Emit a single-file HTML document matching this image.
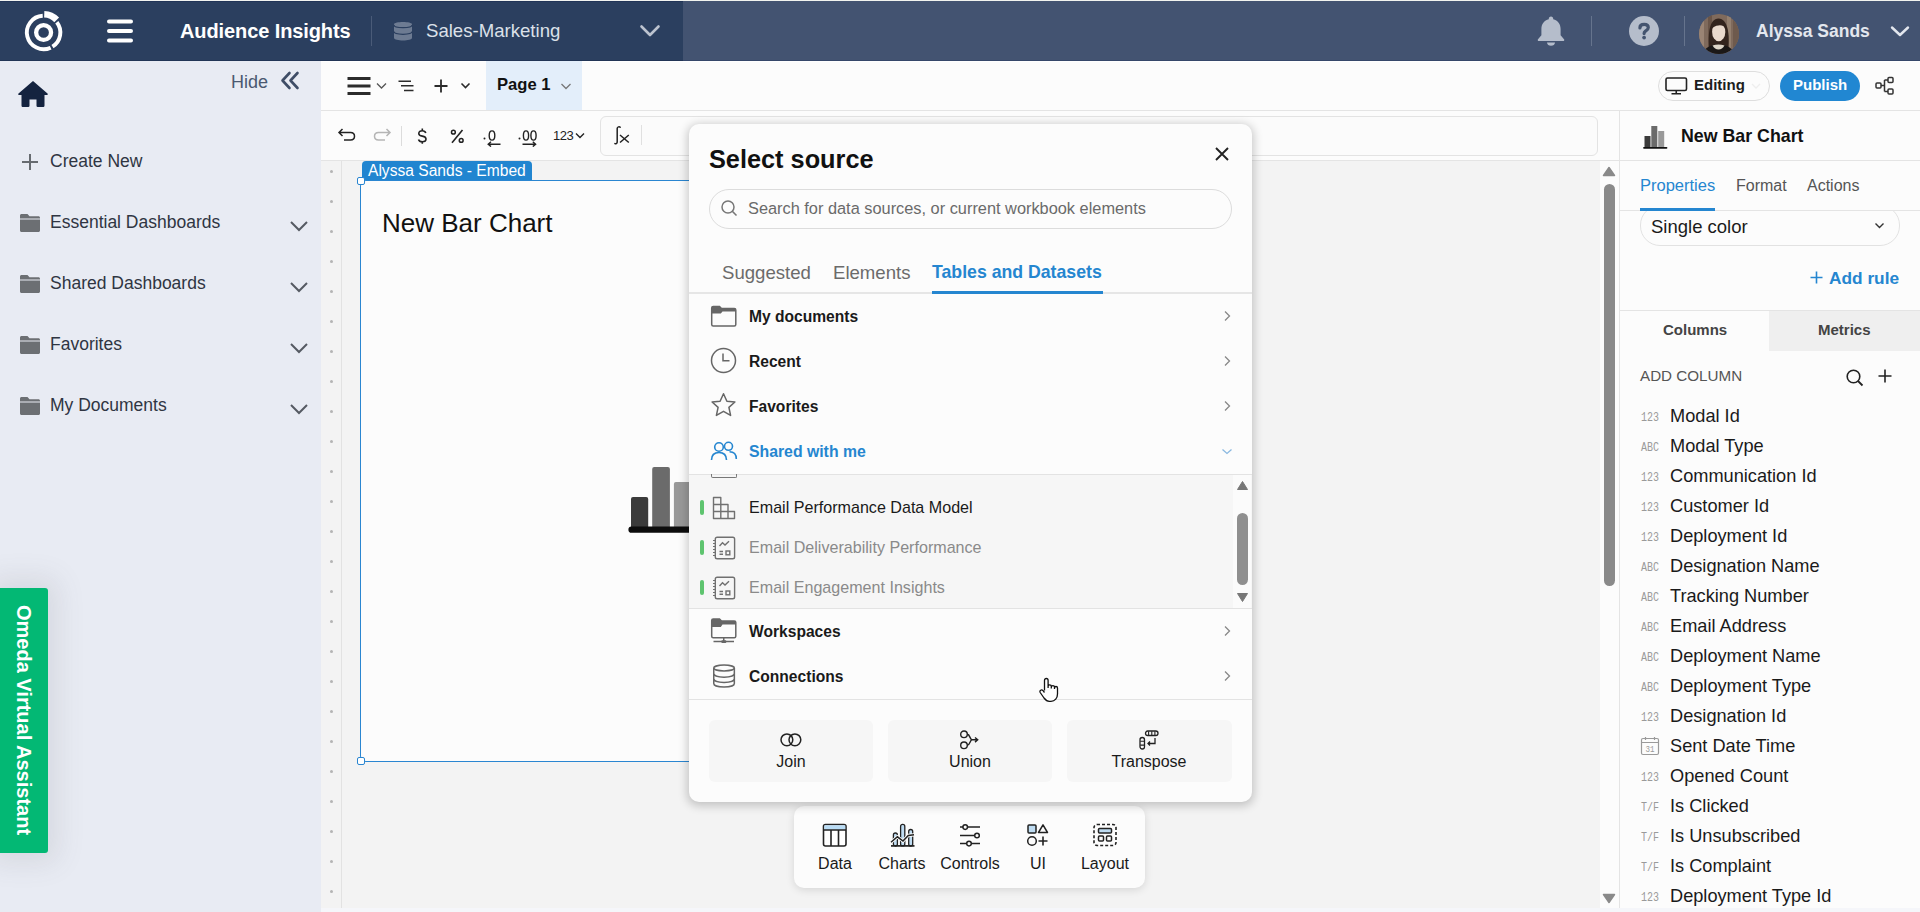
<!DOCTYPE html>
<html><head><meta charset="utf-8">
<style>
*{box-sizing:border-box;margin:0;padding:0}
html,body{width:1920px;height:912px;overflow:hidden;background:#f3f3f3;font-family:"Liberation Sans",sans-serif;color:#1a1a1a}
.abs{position:absolute}
svg{display:block}
#topline{left:0;top:0;width:1920px;height:1px;background:#f2f3ef}
#hdr{left:0;top:1px;width:1920px;height:60px;background:#435371;border-bottom:1px solid #36476a}
#hdrL{left:0;top:1px;width:683px;height:60px;background:#2b3f5f;border-top:1px solid #213457;border-bottom:1px solid #223556}
#side{left:0;top:61px;width:321px;height:851px;background:#e8ebf3}
#tb1{left:321px;top:61px;width:1599px;height:50px;background:#fcfcfc;border-bottom:1px solid #e4e4e4;border-top:1px solid #fff}
#tb2{left:321px;top:111px;width:1299px;height:50px;background:#fcfcfc;border-bottom:1px solid #e4e4e4}
#canvas{left:321px;top:161px;width:1299px;height:751px;background:#f3f3f3}
#rp{left:1619px;top:111px;width:301px;height:801px;background:#fcfcfc;border-left:1px solid #e4e4e4}
</style></head>
<body>
<div class="abs" id="topline"></div>
<div class="abs" id="hdr"></div>
<div class="abs" id="hdrL"></div>
<div class="abs" id="side"></div>
<div class="abs" id="tb1"></div>
<div class="abs" id="tb2"></div>
<div class="abs" id="canvas"></div>
<div class="abs" id="rp"></div>




<!-- CANVAS -->
<div class="abs" style="left:341px;top:161px;width:1px;height:751px;background:#e2e2e2"></div>
<div class="abs" style="left:330px;top:170px;width:3px;height:3px;border-radius:50%;background:#b4b4b4"></div><div class="abs" style="left:330px;top:200px;width:3px;height:3px;border-radius:50%;background:#b4b4b4"></div><div class="abs" style="left:330px;top:230px;width:3px;height:3px;border-radius:50%;background:#b4b4b4"></div><div class="abs" style="left:330px;top:260px;width:3px;height:3px;border-radius:50%;background:#b4b4b4"></div><div class="abs" style="left:330px;top:290px;width:3px;height:3px;border-radius:50%;background:#b4b4b4"></div><div class="abs" style="left:330px;top:320px;width:3px;height:3px;border-radius:50%;background:#b4b4b4"></div><div class="abs" style="left:330px;top:350px;width:3px;height:3px;border-radius:50%;background:#b4b4b4"></div><div class="abs" style="left:330px;top:380px;width:3px;height:3px;border-radius:50%;background:#b4b4b4"></div><div class="abs" style="left:330px;top:410px;width:3px;height:3px;border-radius:50%;background:#b4b4b4"></div><div class="abs" style="left:330px;top:440px;width:3px;height:3px;border-radius:50%;background:#b4b4b4"></div><div class="abs" style="left:330px;top:470px;width:3px;height:3px;border-radius:50%;background:#b4b4b4"></div><div class="abs" style="left:330px;top:500px;width:3px;height:3px;border-radius:50%;background:#b4b4b4"></div><div class="abs" style="left:330px;top:530px;width:3px;height:3px;border-radius:50%;background:#b4b4b4"></div><div class="abs" style="left:330px;top:560px;width:3px;height:3px;border-radius:50%;background:#b4b4b4"></div><div class="abs" style="left:330px;top:590px;width:3px;height:3px;border-radius:50%;background:#b4b4b4"></div><div class="abs" style="left:330px;top:620px;width:3px;height:3px;border-radius:50%;background:#b4b4b4"></div><div class="abs" style="left:330px;top:650px;width:3px;height:3px;border-radius:50%;background:#b4b4b4"></div><div class="abs" style="left:330px;top:680px;width:3px;height:3px;border-radius:50%;background:#b4b4b4"></div><div class="abs" style="left:330px;top:710px;width:3px;height:3px;border-radius:50%;background:#b4b4b4"></div><div class="abs" style="left:330px;top:740px;width:3px;height:3px;border-radius:50%;background:#b4b4b4"></div><div class="abs" style="left:330px;top:770px;width:3px;height:3px;border-radius:50%;background:#b4b4b4"></div><div class="abs" style="left:330px;top:800px;width:3px;height:3px;border-radius:50%;background:#b4b4b4"></div><div class="abs" style="left:330px;top:830px;width:3px;height:3px;border-radius:50%;background:#b4b4b4"></div><div class="abs" style="left:330px;top:860px;width:3px;height:3px;border-radius:50%;background:#b4b4b4"></div><div class="abs" style="left:330px;top:890px;width:3px;height:3px;border-radius:50%;background:#b4b4b4"></div>
<div class="abs" style="left:360px;top:180px;width:400px;height:582px;background:#fcfcfc;border:1px solid #2a86d1;border-radius:6px 0 0 6px"></div>
<div class="abs" style="left:362px;top:161px;width:170px;height:19px;background:#2185d0;border-radius:4px 4px 0 0"></div>
<div class="abs" style="left:368px;top:161px;font-size:15.6px;line-height:19px;color:#fff;white-space:nowrap">Alyssa Sands - Embed</div>
<div class="abs" style="left:357px;top:177px;width:8px;height:8px;background:#fff;border:1.5px solid #2a86d1;border-radius:2px"></div>
<div class="abs" style="left:357px;top:757px;width:8px;height:8px;background:#fff;border:1.5px solid #2a86d1;border-radius:2px"></div>
<div class="abs" style="left:382px;top:208px;font-size:26px;color:#111;white-space:nowrap">New Bar Chart</div>
<svg class="abs" style="left:625px;top:464px" width="70" height="72" viewBox="0 0 70 72">
<rect x="6" y="33" width="17.2" height="32" rx="2" fill="#3b3b3b"/>
<rect x="27.2" y="3" width="17.7" height="62" rx="2" fill="#6b6b6b"/>
<rect x="48.9" y="18" width="20" height="47" rx="2" fill="#999"/>
<path d="M6.5 65.7H69" stroke="#0d0d0d" stroke-width="6.2" stroke-linecap="round"/>
</svg>
<!-- canvas scrollbar -->
<div class="abs" style="left:1600px;top:161px;width:19px;height:751px;background:#fcfcfc"></div>
<svg class="abs" style="left:1602px;top:166px" width="14" height="11" viewBox="0 0 14 11"><path d="M7 1.5L12.5 9.5H1.5Z" fill="#8a8a8a" stroke="#8a8a8a" stroke-width="1.5" stroke-linejoin="round"/></svg>
<div class="abs" style="left:1604px;top:184px;width:11px;height:402px;background:#8a8a8a;border-radius:6px"></div>
<svg class="abs" style="left:1602px;top:893px" width="14" height="11" viewBox="0 0 14 11"><path d="M7 9.5L12.5 1.5H1.5Z" fill="#8a8a8a" stroke="#8a8a8a" stroke-width="1.5" stroke-linejoin="round"/></svg>
<!-- TOOLBAR1 -->
<div class="abs" style="left:486px;top:61px;width:96px;height:49px;background:#e3eefa"></div>
<svg class="abs" style="left:346px;top:75px" width="26" height="22" viewBox="0 0 26 22">
<path d="M1.5 3.6H24.5M1.5 11H24.5M1.5 18.4H24.5" stroke="#2b2b2b" stroke-width="3"/>
</svg>
<svg class="abs" style="left:376px;top:82px" width="11" height="8" viewBox="0 0 11 8"><path d="M1 1.5L5.5 6L10 1.5" fill="none" stroke="#555" stroke-width="1.3"/></svg>
<svg class="abs" style="left:398px;top:80px" width="17" height="12" viewBox="0 0 17 12">
<path d="M0.5 1.2H13M3 5.8H15.5M6 10.4H15.5" stroke="#2b2b2b" stroke-width="1.5"/>
</svg>
<svg class="abs" style="left:434px;top:79px" width="14" height="14" viewBox="0 0 14 14"><path d="M7 0.5V13.5M0.5 7H13.5" stroke="#2b2b2b" stroke-width="1.8"/></svg>
<svg class="abs" style="left:460px;top:82px" width="11" height="8" viewBox="0 0 11 8"><path d="M1.5 1.5L5.5 5.5L9.5 1.5" fill="none" stroke="#2b2b2b" stroke-width="1.6"/></svg>
<div class="abs" style="left:497px;top:75px;font-weight:bold;font-size:16.6px;color:#111;white-space:nowrap">Page 1</div>
<svg class="abs" style="left:560px;top:82px" width="12" height="9" viewBox="0 0 12 9"><path d="M1.5 2L6 6.5L10.5 2" fill="none" stroke="#777" stroke-width="1.3"/></svg>

<div class="abs" style="left:1658px;top:71px;width:112px;height:30px;border:1px solid #dedede;border-radius:15px;background:#fcfcfc"></div>
<svg class="abs" style="left:1665px;top:77px" width="23" height="18" viewBox="0 0 23 18">
<rect x="1" y="1" width="20.5" height="12.5" rx="1.5" fill="none" stroke="#222" stroke-width="1.6"/>
<path d="M11.25 13.5V16.5M6.5 16.8H16" stroke="#222" stroke-width="1.6"/>
</svg>
<div class="abs" style="left:1694px;top:76px;font-weight:bold;font-size:15px;color:#1d1d1d;white-space:nowrap">Editing</div>
<svg class="abs" style="left:1750px;top:82px" width="12" height="8" viewBox="0 0 12 8"><path d="M2 2L6 6L10 2" fill="none" stroke="#eeeeee" stroke-width="1.3"/></svg>
<div class="abs" style="left:1780px;top:71px;width:80px;height:30px;border-radius:15px;background:#2187d2"></div>
<div class="abs" style="left:1793px;top:76px;font-weight:bold;font-size:15px;color:#fff;white-space:nowrap">Publish</div>
<svg class="abs" style="left:1875px;top:76px" width="20" height="20" viewBox="0 0 20 20">
<rect x="1" y="7" width="5" height="5" rx="1" fill="none" stroke="#333" stroke-width="1.5"/>
<rect x="13" y="1.5" width="5" height="5" rx="1" fill="none" stroke="#333" stroke-width="1.5"/>
<rect x="13" y="13" width="5" height="5" rx="1" fill="none" stroke="#333" stroke-width="1.5"/>
<path d="M6 9.5H9.5M9.5 4V15.5M9.5 4H13M9.5 15.5H13" fill="none" stroke="#333" stroke-width="1.5"/>
</svg>

<!-- TOOLBAR2 -->
<svg class="abs" style="left:337px;top:127px" width="20" height="15" viewBox="0 0 20 15">
<path d="M5.5 2L2 5.5L5.5 9M2 5.5H13.5C16 5.5 17.5 7 17.5 9.3C17.5 11.5 16 13 13.5 13H7" fill="none" stroke="#222" stroke-width="1.5"/>
</svg>
<svg class="abs" style="left:372px;top:127px" width="20" height="15" viewBox="0 0 20 15">
<path d="M14.5 2L18 5.5L14.5 9M18 5.5H6.5C4 5.5 2.5 7 2.5 9.3C2.5 11.5 4 13 6.5 13H13" fill="none" stroke="#b5b5b5" stroke-width="1.5"/>
</svg>
<div class="abs" style="left:401px;top:126px;width:1px;height:20px;background:#dcdcdc"></div>
<svg class="abs" style="left:416px;top:127px" width="13" height="18" viewBox="0 0 13 18"><path d="M9.8 5.9C9.3 4.5 8 3.7 6.3 3.7C4.3 3.7 2.8 4.7 2.8 6.4C2.8 8.1 4.2 8.7 6.3 9.1C8.5 9.5 10 10.2 10 12.1C10 13.9 8.4 14.8 6.3 14.8C4.4 14.8 3 14 2.5 12.5M6.3 1.6V3.7M6.3 14.8V16.8" fill="none" stroke="#222" stroke-width="1.6"/></svg>
<svg class="abs" style="left:449px;top:127px" width="17" height="18" viewBox="0 0 17 18"><circle cx="4.4" cy="5.2" r="1.9" fill="none" stroke="#222" stroke-width="1.5"/><circle cx="12.2" cy="13.4" r="1.9" fill="none" stroke="#222" stroke-width="1.5"/><path d="M13.5 3L3 15.8" stroke="#222" stroke-width="1.6"/></svg>
<svg class="abs" style="left:482px;top:129px" width="20" height="18" viewBox="0 0 20 18">
<circle cx="2.5" cy="9.5" r="1" fill="#222"/>
<ellipse cx="10" cy="6.5" rx="2.8" ry="4.6" fill="none" stroke="#222" stroke-width="1.4"/>
<path d="M18.5 15.2H6.5M9 12.8L6.2 15.2L9 17.6" fill="none" stroke="#222" stroke-width="1.4"/>
</svg>
<svg class="abs" style="left:517px;top:129px" width="22" height="18" viewBox="0 0 22 18">
<circle cx="2.5" cy="9.5" r="1" fill="#222"/>
<ellipse cx="9" cy="6.5" rx="2.6" ry="4.6" fill="none" stroke="#222" stroke-width="1.4"/>
<ellipse cx="16.5" cy="6.5" rx="2.6" ry="4.6" fill="none" stroke="#222" stroke-width="1.4"/>
<path d="M5.5 15.2H18.5M15.8 12.8L18.6 15.2L15.8 17.6" fill="none" stroke="#222" stroke-width="1.4"/>
</svg>
<div class="abs" style="left:553px;top:128px;font-size:13px;color:#222;white-space:nowrap;letter-spacing:-0.5px">123</div>
<svg class="abs" style="left:575px;top:132px" width="10" height="7" viewBox="0 0 10 7"><path d="M1 1.5L5 5.5L9 1.5" fill="none" stroke="#222" stroke-width="1.4"/></svg>
<div class="abs" style="left:600px;top:116px;width:998px;height:40px;border:1px solid #e3e3e3;border-radius:6px;background:#fbfbfb"></div>
<svg class="abs" style="left:612px;top:124px" width="22" height="24" viewBox="0 0 22 24">
<path d="M8.2 3.3C7.5 2.5 5.4 2.6 5.2 4.4V18.2C5 19.7 3.8 20.1 2.9 19.6" fill="none" stroke="#222" stroke-width="1.5" stroke-linecap="round"/>
<path d="M8 11L16.8 18.5M16.8 11L8 18.5" stroke="#222" stroke-width="1.5"/>
</svg>
<div class="abs" style="left:641px;top:125px;width:1px;height:20px;background:#e0e0e0"></div>


<!-- DOCK -->
<div class="abs" style="left:794px;top:806px;width:351px;height:82px;background:#fcfcfc;border-radius:10px;box-shadow:0 2px 8px rgba(0,0,0,0.12)"></div>
<svg class="abs" style="left:822px;top:823px" width="26" height="25" viewBox="0 0 26 25">
<rect x="1.5" y="1.5" width="22.5" height="21.5" rx="2" fill="#fff" stroke="#222" stroke-width="1.6"/>
<rect x="2.3" y="2.3" width="21" height="4.5" fill="#b9dcf5"/>
<path d="M1.5 7H24M9 7V23M16.5 7V23" stroke="#222" stroke-width="1.6"/>
</svg>
<div class="abs" style="left:790px;top:855px;width:90px;text-align:center;font-size:16px;color:#1a1a1a">Data</div>
<svg class="abs" style="left:889px;top:822px" width="27" height="26" viewBox="0 0 27 26">
<rect x="4.4" y="11" width="4" height="13" rx="2" fill="#bfdcf2" stroke="#222" stroke-width="1.3"/>
<rect x="11.6" y="2.4" width="4.2" height="21.5" rx="2" fill="#bfdcf2" stroke="#222" stroke-width="1.3"/>
<rect x="19.7" y="7.5" width="4" height="16.5" rx="2" fill="#bfdcf2" stroke="#222" stroke-width="1.3"/>
<path d="M2 20.2L8.4 14.8L14 19L19.3 13.4L25 12.8" fill="none" stroke="#fcfcfc" stroke-width="3.2"/>
<path d="M2 20.2L8.4 14.8L14 19L19.3 13.4L25 12.8" fill="none" stroke="#222" stroke-width="1.5"/>
<path d="M2 23.9H25.5" stroke="#222" stroke-width="1.7"/>
</svg>
<div class="abs" style="left:857px;top:855px;width:90px;text-align:center;font-size:16px;color:#1a1a1a">Charts</div>
<svg class="abs" style="left:958px;top:823px" width="24" height="24" viewBox="0 0 24 24">
<path d="M2 4.1H22M2 12.5H22M2 20.6H22" stroke="#222" stroke-width="1.5"/>
<circle cx="7.2" cy="4.1" r="2.3" fill="#fcfcfc" stroke="#222" stroke-width="1.5"/>
<circle cx="19" cy="12.5" r="2.3" fill="#fcfcfc" stroke="#222" stroke-width="1.5"/>
<circle cx="11" cy="20.6" r="2.3" fill="#fcfcfc" stroke="#222" stroke-width="1.5"/>
</svg>
<div class="abs" style="left:925px;top:855px;width:90px;text-align:center;font-size:16px;color:#1a1a1a">Controls</div>
<svg class="abs" style="left:1026px;top:823px" width="24" height="24" viewBox="0 0 24 24">
<rect x="2" y="2" width="8" height="8" rx="1" fill="#bfdcf2" stroke="#222" stroke-width="1.5"/>
<path d="M17 1.8L21.5 9.5H12.5Z" fill="none" stroke="#222" stroke-width="1.5" stroke-linejoin="round"/>
<circle cx="6" cy="18" r="4.3" fill="none" stroke="#222" stroke-width="1.5"/>
<path d="M17 13.5V22.5M12.5 18H21.5" stroke="#222" stroke-width="1.6"/>
</svg>
<div class="abs" style="left:993px;top:855px;width:90px;text-align:center;font-size:16px;color:#1a1a1a">UI</div>
<svg class="abs" style="left:1092px;top:823px" width="26" height="24" viewBox="0 0 26 24">
<rect x="2" y="1.5" width="22" height="21" rx="3" fill="none" stroke="#222" stroke-width="1.6" stroke-dasharray="3 2"/>
<rect x="6.5" y="5.5" width="13" height="4.5" rx="1" fill="#bfdcf2" stroke="#222" stroke-width="1.5"/>
<rect x="6.5" y="13" width="5" height="5" rx="1" fill="none" stroke="#222" stroke-width="1.5"/>
<rect x="14.5" y="13" width="5" height="5" rx="1" fill="none" stroke="#222" stroke-width="1.5"/>
</svg>
<div class="abs" style="left:1060px;top:855px;width:90px;text-align:center;font-size:16px;color:#1a1a1a">Layout</div>
<!-- MODAL -->
<div class="abs" style="left:689px;top:124px;width:563px;height:678px;background:#fcfcfc;border-radius:10px;box-shadow:0 2px 10px 2px rgba(0,0,0,0.2)"></div>
<div class="abs" style="left:709px;top:145px;font-weight:bold;font-size:25.3px;color:#111;white-space:nowrap">Select source</div>
<svg class="abs" style="left:1213px;top:145px" width="18" height="18" viewBox="0 0 18 18"><path d="M3 3L15 15M15 3L3 15" stroke="#222" stroke-width="1.9"/></svg>
<div class="abs" style="left:709px;top:189px;width:523px;height:40px;border:1px solid #dcdcdc;border-radius:20px;background:#fcfcfc"></div>
<svg class="abs" style="left:720px;top:199px" width="19" height="19" viewBox="0 0 19 19"><circle cx="8" cy="8" r="6" fill="none" stroke="#777" stroke-width="1.5"/><path d="M12.3 12.3L16.5 16.5" stroke="#777" stroke-width="1.6"/></svg>
<div class="abs" style="left:748px;top:199px;font-size:16.35px;color:#6a6a6a;white-space:nowrap">Search for data sources, or current workbook elements</div>
<div class="abs" style="left:722px;top:262px;font-size:18.6px;color:#6b6b6b;white-space:nowrap">Suggested</div>
<div class="abs" style="left:833px;top:262px;font-size:18.6px;color:#6b6b6b;white-space:nowrap">Elements</div>
<div class="abs" style="left:932px;top:262px;font-weight:bold;font-size:17.7px;color:#2586d0;white-space:nowrap">Tables and Datasets</div>
<div class="abs" style="left:689px;top:292px;width:563px;height:2px;background:#e6e6e6"></div>
<div class="abs" style="left:932px;top:291px;width:171px;height:3px;background:#2586d0"></div>

<svg class="abs" style="left:710px;top:305px" width="28" height="23" viewBox="0 0 28 23">
<path d="M1.7 3C1.7 2.2 2.4 1.6 3.2 1.6H9.5L11.5 3.6H24.3C25.1 3.6 25.8 4.3 25.8 5.1V19.5C25.8 20.3 25.1 21 24.3 21H3.2C2.4 21 1.7 20.3 1.7 19.5Z" fill="none" stroke="#666" stroke-width="1.5"/>
<path d="M3.2 1.6H9.5L11.5 3.6H24.3C25.1 3.6 25.8 4.3 25.8 5.1V6.6H12.5L10.8 8.6H1.7V3C1.7 2.2 2.4 1.6 3.2 1.6Z" fill="#666"/>
</svg>
<div class="abs" style="left:749px;top:308px;font-weight:bold;font-size:15.6px;color:#1a1a1a;white-space:nowrap">My documents</div>
<svg class="abs" style="left:1222px;top:310px" width="10" height="12" viewBox="0 0 10 12"><path d="M3 1.5L7.5 6L3 10.5" fill="none" stroke="#888" stroke-width="1.3"/></svg>
<svg class="abs" style="left:710px;top:347px" width="28" height="28" viewBox="0 0 28 28"><circle cx="13.5" cy="13.5" r="12" fill="none" stroke="#666" stroke-width="1.5"/><path d="M13 6.5V13.8H19.5" fill="none" stroke="#666" stroke-width="1.5"/></svg>
<div class="abs" style="left:749px;top:353px;font-weight:bold;font-size:15.6px;color:#1a1a1a;white-space:nowrap">Recent</div>
<svg class="abs" style="left:1222px;top:355px" width="10" height="12" viewBox="0 0 10 12"><path d="M3 1.5L7.5 6L3 10.5" fill="none" stroke="#888" stroke-width="1.3"/></svg>
<svg class="abs" style="left:710px;top:392px" width="28" height="27" viewBox="0 0 28 27"><path d="M13.5 1.8L16.9 9.2L24.9 10L18.9 15.4L20.6 23.4L13.5 19.3L6.4 23.4L8.1 15.4L2.1 10L10.1 9.2Z" fill="none" stroke="#666" stroke-width="1.5" stroke-linejoin="round"/></svg>
<div class="abs" style="left:749px;top:398px;font-weight:bold;font-size:15.6px;color:#1a1a1a;white-space:nowrap">Favorites</div>
<svg class="abs" style="left:1222px;top:400px" width="10" height="12" viewBox="0 0 10 12"><path d="M3 1.5L7.5 6L3 10.5" fill="none" stroke="#888" stroke-width="1.3"/></svg>
<svg class="abs" style="left:710px;top:441px" width="28" height="20" viewBox="0 0 28 20">
<circle cx="9" cy="6" r="4.3" fill="none" stroke="#2586d0" stroke-width="1.6"/>
<path d="M1.5 19C1.5 14 4.5 11.5 9 11.5C13.5 11.5 16.5 14 16.5 19" fill="none" stroke="#2586d0" stroke-width="1.6"/>
<circle cx="18.5" cy="5.3" r="4" fill="none" stroke="#2586d0" stroke-width="1.6"/>
<path d="M19.5 10.8C23.5 10.8 26.3 13.2 26.3 18" fill="none" stroke="#2586d0" stroke-width="1.6"/>
</svg>
<div class="abs" style="left:749px;top:443px;font-weight:bold;font-size:15.8px;color:#2586d0;white-space:nowrap">Shared with me</div>
<svg class="abs" style="left:1221px;top:447px" width="12" height="9" viewBox="0 0 12 9"><path d="M1.5 2.5L6 6.5L10.5 2.5" fill="none" stroke="#8ab8e0" stroke-width="1.3"/></svg>

<div class="abs" style="left:689px;top:474px;width:563px;height:135px;background:#f6f6f6;border-top:1px solid #e3e3e3;border-bottom:1px solid #e3e3e3"></div>
<div class="abs" style="left:1233px;top:475px;width:18px;height:133px;background:#fbfbfb"></div>
<div class="abs" style="left:711px;top:474px;width:26px;height:4px;border:1.5px solid #777;border-top:none;border-radius:0 0 2px 2px"></div>
<svg class="abs" style="left:1236px;top:480px" width="13" height="11" viewBox="0 0 13 11"><path d="M6.5 1.5L11.5 9.5H1.5Z" fill="#777" stroke="#777" stroke-width="1" stroke-linejoin="round"/></svg>
<div class="abs" style="left:1237px;top:513px;width:11px;height:72px;background:#8f8f8f;border-radius:6px"></div>
<svg class="abs" style="left:1236px;top:592px" width="13" height="11" viewBox="0 0 13 11"><path d="M6.5 9.5L11.5 1.5H1.5Z" fill="#777" stroke="#777" stroke-width="1" stroke-linejoin="round"/></svg>

<div class="abs" style="left:700px;top:500px;width:4px;height:15px;background:#5ec46f;border-radius:2px"></div>
<svg class="abs" style="left:712px;top:496px" width="24" height="24" viewBox="0 0 24 24">
<path d="M1.5 1.5H8.8V22.5H1.5ZM1.5 8.5H16V22.5H8.8M1.5 15.5H22.5V22.5H16V8.5" fill="none" stroke="#707070" stroke-width="1.4" stroke-linejoin="round"/>
</svg>
<div class="abs" style="left:749px;top:498px;font-size:16.1px;color:#1a1a1a;white-space:nowrap">Email Performance Data Model</div>
<div class="abs" style="left:700px;top:540px;width:4px;height:15px;background:#5ec46f;border-radius:2px"></div>
<svg class="abs" style="left:712px;top:536px" width="24" height="24" viewBox="0 0 24 24" id="rpt">
<rect x="3.3" y="1.2" width="19.3" height="21.5" rx="1.8" fill="none" stroke="#707070" stroke-width="1.4"/>
<path d="M1 4.5H3.5M1 7.5H3.5M1 10.5H3.5M1 13.5H3.5M1 16.5H3.5M1 19.5H3.5" stroke="#707070" stroke-width="1.2"/>
<path d="M7.5 10L10.5 6.8L13 9L17 5.2" fill="none" stroke="#707070" stroke-width="1.4"/>
<path d="M7.5 15.5H11M7.5 18.3H11" stroke="#707070" stroke-width="1.4"/>
<rect x="14" y="15" width="3.8" height="3.8" fill="none" stroke="#707070" stroke-width="1.4"/>
</svg>
<div class="abs" style="left:749px;top:538px;font-size:16.1px;color:#8a8a8a;white-space:nowrap">Email Deliverability Performance</div>
<div class="abs" style="left:700px;top:580px;width:4px;height:15px;background:#5ec46f;border-radius:2px"></div>
<svg class="abs" style="left:712px;top:576px" width="24" height="24" viewBox="0 0 24 24">
<rect x="3.3" y="1.2" width="19.3" height="21.5" rx="1.8" fill="none" stroke="#707070" stroke-width="1.4"/>
<path d="M1 4.5H3.5M1 7.5H3.5M1 10.5H3.5M1 13.5H3.5M1 16.5H3.5M1 19.5H3.5" stroke="#707070" stroke-width="1.2"/>
<path d="M7.5 10L10.5 6.8L13 9L17 5.2" fill="none" stroke="#707070" stroke-width="1.4"/>
<path d="M7.5 15.5H11M7.5 18.3H11" stroke="#707070" stroke-width="1.4"/>
<rect x="14" y="15" width="3.8" height="3.8" fill="none" stroke="#707070" stroke-width="1.4"/>
</svg>
<div class="abs" style="left:749px;top:578px;font-size:16.1px;color:#8a8a8a;white-space:nowrap">Email Engagement Insights</div>

<svg class="abs" style="left:710px;top:617px" width="28" height="28" viewBox="0 0 28 28">
<path d="M1.7 3.4C1.7 2.6 2.4 1.9 3.2 1.9H9.5L11.5 4H24.3C25.1 4 25.8 4.7 25.8 5.5V19.3C25.8 20.1 25.1 20.8 24.3 20.8H3.2C2.4 20.8 1.7 20.1 1.7 19.3Z" fill="none" stroke="#666" stroke-width="1.5"/>
<path d="M3.2 1.9H9.5L11.5 4H24.3C25.1 4 25.8 4.7 25.8 5.5V7.6H12.5L10.8 10.1H1.7V3.4C1.7 2.6 2.4 1.9 3.2 1.9Z" fill="#666"/>
<path d="M13.75 20.8V24M3.5 24.6H24" stroke="#666" stroke-width="1.5"/>
<rect x="11.3" y="23.2" width="5" height="2.8" rx="1" fill="#666"/>
</svg>
<div class="abs" style="left:749px;top:623px;font-weight:bold;font-size:15.6px;color:#1a1a1a;white-space:nowrap">Workspaces</div>
<svg class="abs" style="left:1222px;top:625px" width="10" height="12" viewBox="0 0 10 12"><path d="M3 1.5L7.5 6L3 10.5" fill="none" stroke="#888" stroke-width="1.3"/></svg>
<svg class="abs" style="left:711px;top:663px" width="27" height="27" viewBox="0 0 27 27">
<ellipse cx="13.05" cy="5" rx="10.3" ry="2.9" fill="none" stroke="#666" stroke-width="1.5"/>
<path d="M2.75 5V20.5C2.75 22.5 7 24.1 13.05 24.1S23.35 22.5 23.35 20.5V5M2.75 10.6C2.75 12.6 7 14.2 13.05 14.2S23.35 12.6 23.35 10.6M2.75 15.8C2.75 17.8 7 19.4 13.05 19.4S23.35 17.8 23.35 15.8" fill="none" stroke="#666" stroke-width="1.5"/>
</svg>
<div class="abs" style="left:749px;top:668px;font-weight:bold;font-size:15.6px;color:#1a1a1a;white-space:nowrap">Connections</div>
<svg class="abs" style="left:1222px;top:670px" width="10" height="12" viewBox="0 0 10 12"><path d="M3 1.5L7.5 6L3 10.5" fill="none" stroke="#888" stroke-width="1.3"/></svg>
<div class="abs" style="left:689px;top:699px;width:563px;height:1px;background:#e3e3e3"></div>

<div class="abs" style="left:709px;top:720px;width:164px;height:62px;background:#f6f6f6;border-radius:6px"></div>
<div class="abs" style="left:888px;top:720px;width:164px;height:62px;background:#f6f6f6;border-radius:6px"></div>
<div class="abs" style="left:1067px;top:720px;width:165px;height:62px;background:#f6f6f6;border-radius:6px"></div>
<svg class="abs" style="left:779px;top:731px" width="24" height="18" viewBox="0 0 24 18"><circle cx="7.9" cy="8.8" r="5.9" fill="none" stroke="#222" stroke-width="1.5"/><circle cx="15.9" cy="8.8" r="5.9" fill="none" stroke="#222" stroke-width="1.5"/></svg>
<div class="abs" style="left:700px;top:753px;width:182px;text-align:center;font-size:16px;color:#1a1a1a;white-space:nowrap">Join</div>
<svg class="abs" style="left:959px;top:730px" width="22" height="20" viewBox="0 0 22 20"><circle cx="5" cy="4.3" r="3.3" fill="none" stroke="#222" stroke-width="1.4"/><circle cx="5" cy="15.3" r="3.3" fill="none" stroke="#222" stroke-width="1.4"/><path d="M8.3 4.3C11 4.3 11 9.8 13 9.8H18.5M8.3 15.3C11 15.3 11 9.8 13 9.8M16 7.5L18.7 9.8L16 12.1" fill="none" stroke="#222" stroke-width="1.4"/></svg>
<div class="abs" style="left:879px;top:753px;width:182px;text-align:center;font-size:16px;color:#1a1a1a;white-space:nowrap">Union</div>
<svg class="abs" style="left:1138px;top:730px" width="22" height="20" viewBox="0 0 22 20"><rect x="7.5" y="1" width="12.5" height="4.5" rx="2.2" fill="none" stroke="#222" stroke-width="1.3"/><path d="M10.6 1.2V5.3M13.8 1.2V5.3M16.9 1.2V5.3" stroke="#222" stroke-width="1.1"/><rect x="2" y="7.5" width="4.5" height="11.5" rx="2.2" fill="none" stroke="#222" stroke-width="1.3"/><path d="M2.2 11.3H6.3M2.2 15.1H6.3" stroke="#222" stroke-width="1.1"/><path d="M17 8V13.5H10M12 11.5L10 13.5L12 15.5" fill="none" stroke="#222" stroke-width="1.3"/></svg>
<div class="abs" style="left:1058px;top:753px;width:182px;text-align:center;font-size:16px;color:#1a1a1a;white-space:nowrap">Transpose</div>
<svg class="abs" style="left:1037px;top:677px" width="24" height="26" viewBox="0 0 24 26">
<path d="M7.5 13.5V3.5C7.5 2.3 8.3 1.5 9.3 1.5C10.3 1.5 11.1 2.3 11.1 3.5V11M11.1 9.5C11.1 8.5 11.8 7.8 12.7 7.8C13.6 7.8 14.3 8.5 14.3 9.5V11.5M14.3 10.3C14.3 9.3 15 8.6 15.9 8.6C16.8 8.6 17.5 9.3 17.5 10.3V12M17.5 11C17.5 10.1 18.2 9.5 19 9.5C19.8 9.5 20.5 10.1 20.5 11V17C20.5 21 18 24.3 14 24.3H12.3C9.8 24.3 8.5 23 7 21L3.2 15.5C2.7 14.7 2.9 13.7 3.7 13.2C4.5 12.7 5.4 13 6 13.7L7.5 15.5" fill="#fff" stroke="#111" stroke-width="1.3" stroke-linejoin="round"/>
</svg>

<!-- RIGHTPANEL -->
<div class="abs" style="left:1620px;top:160px;width:300px;height:1px;background:#e4e4e4"></div>
<svg class="abs" style="left:1642px;top:124px" width="26" height="26" viewBox="0 0 26 26">
<rect x="2.5" y="12" width="6" height="11" fill="#3b3b3b"/>
<rect x="9.3" y="2" width="6" height="21" fill="#6b6b6b"/>
<rect x="16.2" y="7" width="6" height="16" fill="#999"/>
<path d="M2 23.8H24.5" stroke="#111" stroke-width="1.8" stroke-linecap="round"/>
</svg>
<div class="abs" style="left:1681px;top:126px;font-weight:bold;font-size:17.8px;color:#111;white-space:nowrap">New Bar Chart</div>
<div class="abs" style="left:1640px;top:176px;font-size:16.5px;color:#2586d0;white-space:nowrap">Properties</div>
<div class="abs" style="left:1736px;top:177px;font-size:16px;color:#555;white-space:nowrap">Format</div>
<div class="abs" style="left:1807px;top:177px;font-size:16px;color:#555;white-space:nowrap">Actions</div>
<div class="abs" style="left:1620px;top:210px;width:300px;height:1px;background:#e4e4e4"></div>
<div class="abs" style="left:1640px;top:208px;width:75px;height:3px;background:#2586d0"></div>
<div class="abs" style="left:1640px;top:205px;width:260px;height:41px;border:1px solid #e2e2e2;border-radius:20px;background:#fcfcfc;clip-path:inset(6px 0 0 0)"></div>
<div class="abs" style="left:1651px;top:216px;font-size:18.5px;color:#1a1a1a;white-space:nowrap">Single color</div>
<svg class="abs" style="left:1874px;top:222px" width="11" height="8" viewBox="0 0 11 8"><path d="M1.5 1.5L5.5 5.5L9.5 1.5" fill="none" stroke="#333" stroke-width="1.4"/></svg>
<svg class="abs" style="left:1810px;top:271px" width="13" height="13" viewBox="0 0 13 13"><path d="M6.5 0.5V12.5M0.5 6.5H12.5" stroke="#2586d0" stroke-width="1.6"/></svg>
<div class="abs" style="left:1829px;top:268px;font-weight:bold;font-size:17.3px;color:#2586d0;white-space:nowrap">Add rule</div>
<div class="abs" style="left:1620px;top:310px;width:300px;height:1px;background:#e4e4e4"></div>
<div class="abs" style="left:1769px;top:311px;width:151px;height:40px;background:#efefef"></div>
<div class="abs" style="left:1663px;top:321px;font-weight:bold;font-size:15px;color:#444;white-space:nowrap">Columns</div>
<div class="abs" style="left:1818px;top:321px;font-weight:bold;font-size:15px;color:#444;white-space:nowrap">Metrics</div>
<div class="abs" style="left:1640px;top:367px;font-size:15.2px;color:#555;white-space:nowrap">ADD COLUMN</div>
<svg class="abs" style="left:1845px;top:368px" width="20" height="20" viewBox="0 0 20 20"><circle cx="8.5" cy="8.5" r="6.3" fill="none" stroke="#222" stroke-width="1.6"/><path d="M13 13L17.5 17.5" stroke="#222" stroke-width="1.8"/></svg>
<svg class="abs" style="left:1877px;top:368px" width="16" height="16" viewBox="0 0 16 16"><path d="M8 1.5V14.5M1.5 8H14.5" stroke="#222" stroke-width="1.6"/></svg>
<svg class="abs" style="left:1640px;top:410px" width="20" height="12" viewBox="0 0 20 12"><text x="1" y="10.6" font-family="Liberation Mono" font-size="13" fill="#9a9a9a" textLength="18" lengthAdjust="spacingAndGlyphs">123</text></svg><div class="abs" style="left:1670px;top:406px;font-size:18.2px;color:#1a1a1a;white-space:nowrap">Modal Id</div><svg class="abs" style="left:1640px;top:440px" width="20" height="12" viewBox="0 0 20 12"><text x="1" y="10.6" font-family="Liberation Mono" font-size="13" fill="#9a9a9a" textLength="18" lengthAdjust="spacingAndGlyphs">ABC</text></svg><div class="abs" style="left:1670px;top:436px;font-size:18.2px;color:#1a1a1a;white-space:nowrap">Modal Type</div><svg class="abs" style="left:1640px;top:470px" width="20" height="12" viewBox="0 0 20 12"><text x="1" y="10.6" font-family="Liberation Mono" font-size="13" fill="#9a9a9a" textLength="18" lengthAdjust="spacingAndGlyphs">123</text></svg><div class="abs" style="left:1670px;top:466px;font-size:18.2px;color:#1a1a1a;white-space:nowrap">Communication Id</div><svg class="abs" style="left:1640px;top:500px" width="20" height="12" viewBox="0 0 20 12"><text x="1" y="10.6" font-family="Liberation Mono" font-size="13" fill="#9a9a9a" textLength="18" lengthAdjust="spacingAndGlyphs">123</text></svg><div class="abs" style="left:1670px;top:496px;font-size:18.2px;color:#1a1a1a;white-space:nowrap">Customer Id</div><svg class="abs" style="left:1640px;top:530px" width="20" height="12" viewBox="0 0 20 12"><text x="1" y="10.6" font-family="Liberation Mono" font-size="13" fill="#9a9a9a" textLength="18" lengthAdjust="spacingAndGlyphs">123</text></svg><div class="abs" style="left:1670px;top:526px;font-size:18.2px;color:#1a1a1a;white-space:nowrap">Deployment Id</div><svg class="abs" style="left:1640px;top:560px" width="20" height="12" viewBox="0 0 20 12"><text x="1" y="10.6" font-family="Liberation Mono" font-size="13" fill="#9a9a9a" textLength="18" lengthAdjust="spacingAndGlyphs">ABC</text></svg><div class="abs" style="left:1670px;top:556px;font-size:18.2px;color:#1a1a1a;white-space:nowrap">Designation Name</div><svg class="abs" style="left:1640px;top:590px" width="20" height="12" viewBox="0 0 20 12"><text x="1" y="10.6" font-family="Liberation Mono" font-size="13" fill="#9a9a9a" textLength="18" lengthAdjust="spacingAndGlyphs">ABC</text></svg><div class="abs" style="left:1670px;top:586px;font-size:18.2px;color:#1a1a1a;white-space:nowrap">Tracking Number</div><svg class="abs" style="left:1640px;top:620px" width="20" height="12" viewBox="0 0 20 12"><text x="1" y="10.6" font-family="Liberation Mono" font-size="13" fill="#9a9a9a" textLength="18" lengthAdjust="spacingAndGlyphs">ABC</text></svg><div class="abs" style="left:1670px;top:616px;font-size:18.2px;color:#1a1a1a;white-space:nowrap">Email Address</div><svg class="abs" style="left:1640px;top:650px" width="20" height="12" viewBox="0 0 20 12"><text x="1" y="10.6" font-family="Liberation Mono" font-size="13" fill="#9a9a9a" textLength="18" lengthAdjust="spacingAndGlyphs">ABC</text></svg><div class="abs" style="left:1670px;top:646px;font-size:18.2px;color:#1a1a1a;white-space:nowrap">Deployment Name</div><svg class="abs" style="left:1640px;top:680px" width="20" height="12" viewBox="0 0 20 12"><text x="1" y="10.6" font-family="Liberation Mono" font-size="13" fill="#9a9a9a" textLength="18" lengthAdjust="spacingAndGlyphs">ABC</text></svg><div class="abs" style="left:1670px;top:676px;font-size:18.2px;color:#1a1a1a;white-space:nowrap">Deployment Type</div><svg class="abs" style="left:1640px;top:710px" width="20" height="12" viewBox="0 0 20 12"><text x="1" y="10.6" font-family="Liberation Mono" font-size="13" fill="#9a9a9a" textLength="18" lengthAdjust="spacingAndGlyphs">123</text></svg><div class="abs" style="left:1670px;top:706px;font-size:18.2px;color:#1a1a1a;white-space:nowrap">Designation Id</div><svg class="abs" style="left:1640px;top:736px" width="20" height="20" viewBox="0 0 20 20"><rect x="1.5" y="2.5" width="17" height="16" rx="1.5" fill="none" stroke="#9a9a9a" stroke-width="1.2"/><path d="M1.5 6.5H18.5M5.5 1V4M14.5 1V4" stroke="#9a9a9a" stroke-width="1.2"/><text x="10" y="16.3" text-anchor="middle" font-family="Liberation Mono" font-size="9" fill="#9a9a9a" textLength="9" lengthAdjust="spacingAndGlyphs">31</text></svg><div class="abs" style="left:1670px;top:736px;font-size:18.2px;color:#1a1a1a;white-space:nowrap">Sent Date Time</div><svg class="abs" style="left:1640px;top:770px" width="20" height="12" viewBox="0 0 20 12"><text x="1" y="10.6" font-family="Liberation Mono" font-size="13" fill="#9a9a9a" textLength="18" lengthAdjust="spacingAndGlyphs">123</text></svg><div class="abs" style="left:1670px;top:766px;font-size:18.2px;color:#1a1a1a;white-space:nowrap">Opened Count</div><svg class="abs" style="left:1640px;top:800px" width="20" height="12" viewBox="0 0 20 12"><text x="1" y="10.6" font-family="Liberation Mono" font-size="13" fill="#9a9a9a" textLength="18" lengthAdjust="spacingAndGlyphs">T/F</text></svg><div class="abs" style="left:1670px;top:796px;font-size:18.2px;color:#1a1a1a;white-space:nowrap">Is Clicked</div><svg class="abs" style="left:1640px;top:830px" width="20" height="12" viewBox="0 0 20 12"><text x="1" y="10.6" font-family="Liberation Mono" font-size="13" fill="#9a9a9a" textLength="18" lengthAdjust="spacingAndGlyphs">T/F</text></svg><div class="abs" style="left:1670px;top:826px;font-size:18.2px;color:#1a1a1a;white-space:nowrap">Is Unsubscribed</div><svg class="abs" style="left:1640px;top:860px" width="20" height="12" viewBox="0 0 20 12"><text x="1" y="10.6" font-family="Liberation Mono" font-size="13" fill="#9a9a9a" textLength="18" lengthAdjust="spacingAndGlyphs">T/F</text></svg><div class="abs" style="left:1670px;top:856px;font-size:18.2px;color:#1a1a1a;white-space:nowrap">Is Complaint</div><svg class="abs" style="left:1640px;top:890px" width="20" height="12" viewBox="0 0 20 12"><text x="1" y="10.6" font-family="Liberation Mono" font-size="13" fill="#9a9a9a" textLength="18" lengthAdjust="spacingAndGlyphs">123</text></svg><div class="abs" style="left:1670px;top:886px;font-size:18.2px;color:#1a1a1a;white-space:nowrap">Deployment Type Id</div>
<div class="abs" style="left:321px;top:908px;width:1599px;height:4px;background:#f5f6fa"></div>
<!-- SIDEBAR -->
<div class="abs" style="left:231px;top:72px;font-size:18px;color:#4b5971;white-space:nowrap">Hide</div>
<svg class="abs" style="left:279px;top:70px" width="22" height="22" viewBox="0 0 22 22">
<path d="M10.5 3L3.5 10.5L10.5 18M18.5 3L11.5 10.5L18.5 18" fill="none" stroke="#3f4d66" stroke-width="2.6" stroke-linecap="round" stroke-linejoin="round"/>
</svg>
<svg class="abs" style="left:17px;top:80px" width="32" height="28" viewBox="0 0 32 28">
<path d="M16 1L1.5 13.5C0.8 14.2 1.2 15 2 15H4.5V25.5C4.5 26.5 5.2 27 6 27H11.5C12.2 27 12.5 26.5 12.5 25.8V19.5H19.5V25.8C19.5 26.5 19.8 27 20.5 27H26C26.8 27 27.5 26.5 27.5 25.5V15H30C30.8 15 31.2 14.2 30.5 13.5Z" fill="#14233f"/>
</svg>
<svg class="abs" style="left:21px;top:153px" width="18" height="18" viewBox="0 0 18 18">
<path d="M9 1V17M1 9H17" stroke="#676b70" stroke-width="2"/>
</svg>
<div class="abs" style="left:50px;top:151px;font-size:17.5px;color:#2f3542;white-space:nowrap">Create New</div>
<svg class="abs" style="left:20px;top:214px" width="20" height="18" viewBox="0 0 20 18"><path d="M1.5 0H7.5L9.5 2.2H18.5C19.3 2.2 20 2.9 20 3.7V16.5C20 17.3 19.3 18 18.5 18H1.5C0.7 18 0 17.3 0 16.5V1.5C0 0.7 0.7 0 1.5 0Z" fill="#6c6f73"/><path d="M0 5H20" stroke="#e8ebf3" stroke-width="1"/></svg><div class="abs" style="left:50px;top:212px;font-size:17.5px;color:#2f3542;white-space:nowrap">Essential Dashboards</div><svg class="abs" style="left:289px;top:219px" width="20" height="14" viewBox="0 0 20 14"><path d="M2 3L10 11L18 3" fill="none" stroke="#555a62" stroke-width="2"/></svg><svg class="abs" style="left:20px;top:275px" width="20" height="18" viewBox="0 0 20 18"><path d="M1.5 0H7.5L9.5 2.2H18.5C19.3 2.2 20 2.9 20 3.7V16.5C20 17.3 19.3 18 18.5 18H1.5C0.7 18 0 17.3 0 16.5V1.5C0 0.7 0.7 0 1.5 0Z" fill="#6c6f73"/><path d="M0 5H20" stroke="#e8ebf3" stroke-width="1"/></svg><div class="abs" style="left:50px;top:273px;font-size:17.5px;color:#2f3542;white-space:nowrap">Shared Dashboards</div><svg class="abs" style="left:289px;top:280px" width="20" height="14" viewBox="0 0 20 14"><path d="M2 3L10 11L18 3" fill="none" stroke="#555a62" stroke-width="2"/></svg><svg class="abs" style="left:20px;top:336px" width="20" height="18" viewBox="0 0 20 18"><path d="M1.5 0H7.5L9.5 2.2H18.5C19.3 2.2 20 2.9 20 3.7V16.5C20 17.3 19.3 18 18.5 18H1.5C0.7 18 0 17.3 0 16.5V1.5C0 0.7 0.7 0 1.5 0Z" fill="#6c6f73"/><path d="M0 5H20" stroke="#e8ebf3" stroke-width="1"/></svg><div class="abs" style="left:50px;top:334px;font-size:17.5px;color:#2f3542;white-space:nowrap">Favorites</div><svg class="abs" style="left:289px;top:341px" width="20" height="14" viewBox="0 0 20 14"><path d="M2 3L10 11L18 3" fill="none" stroke="#555a62" stroke-width="2"/></svg><svg class="abs" style="left:20px;top:397px" width="20" height="18" viewBox="0 0 20 18"><path d="M1.5 0H7.5L9.5 2.2H18.5C19.3 2.2 20 2.9 20 3.7V16.5C20 17.3 19.3 18 18.5 18H1.5C0.7 18 0 17.3 0 16.5V1.5C0 0.7 0.7 0 1.5 0Z" fill="#6c6f73"/><path d="M0 5H20" stroke="#e8ebf3" stroke-width="1"/></svg><div class="abs" style="left:50px;top:395px;font-size:17.5px;color:#2f3542;white-space:nowrap">My Documents</div><svg class="abs" style="left:289px;top:402px" width="20" height="14" viewBox="0 0 20 14"><path d="M2 3L10 11L18 3" fill="none" stroke="#555a62" stroke-width="2"/></svg>
<div class="abs" style="left:0;top:588px;width:48px;height:265px;background:#03b874;border-radius:0 3px 3px 0;box-shadow:0 0 28px 10px rgba(90,90,100,0.12)"></div>
<div class="abs" style="left:0;top:588px;width:48px;height:265px;overflow:hidden">
<div class="abs" style="left:14px;top:17px;width:20px;writing-mode:vertical-rl;font-weight:bold;font-size:20px;color:#fff;white-space:nowrap;line-height:20px">Omeda Virtual Assistant</div>
</div>
<!-- HEADER -->
<svg class="abs" style="left:0;top:0" width="70" height="61" viewBox="0 0 70 61">
<circle cx="43.6" cy="32.5" r="7.45" fill="none" stroke="#fff" stroke-width="4.3"/>
<path d="M44.24 14.31A18.2 18.2 0 0 1 56.69 19.86" fill="none" stroke="#fff" stroke-width="6.6"/>
<path d="M56.80 22.19A16.75 16.75 0 0 1 52.48 46.70" fill="none" stroke="#fff" stroke-width="3.9"/>
<path d="M50.68 47.68A16.75 16.75 0 1 1 42.72 15.77" fill="none" stroke="#fff" stroke-width="3.9"/>
</svg>
<svg class="abs" style="left:105px;top:18px" width="30" height="26" viewBox="0 0 30 26">
<path d="M4 3.5H26M4 13H26M4 22.5H26" stroke="#fff" stroke-width="4" stroke-linecap="round"/>
</svg>
<div class="abs" style="left:180px;top:20px;font-weight:bold;font-size:20px;color:#fff;letter-spacing:-0.1px;white-space:nowrap">Audience Insights</div>
<div class="abs" style="left:371px;top:16px;width:1px;height:30px;background:#4a5b78"></div>
<svg class="abs" style="left:393px;top:20px" width="20" height="22" viewBox="0 0 20 22">
<path d="M1 4.2C1 1.2 19 1.2 19 4.2V17.8C19 21.4 1 21.4 1 17.8Z" fill="#6d7b92"/>
<path d="M1 5C1 8.6 19 8.6 19 5M1 11.6C1 15.2 19 15.2 19 11.6" fill="none" stroke="#2a3e5e" stroke-width="1.2"/>
</svg>
<div class="abs" style="left:426px;top:20px;font-size:18.6px;color:#dce1e9;white-space:nowrap">Sales-Marketing</div>
<svg class="abs" style="left:638px;top:23px" width="24" height="16" viewBox="0 0 24 16">
<path d="M3.5 3.5L12 12L20.5 3.5" fill="none" stroke="#bcc3cf" stroke-width="2.6" stroke-linecap="round" stroke-linejoin="round"/>
</svg>
<svg class="abs" style="left:1536px;top:15px" width="30" height="32" viewBox="0 0 30 32">
<path d="M15 1.5c-1.3 0-2.2 1-2.2 2.2v0.6C8.2 5.4 5.4 9.3 5.4 14v6.2L2 24.2c-.6.8-.2 1.8.9 1.8h24.2c1.1 0 1.5-1 .9-1.8l-3.4-4V14c0-4.7-2.8-8.6-7.4-9.7v-.6c0-1.2-.9-2.2-2.2-2.2z" fill="#b5bdcb"/>
<path d="M11 27.5h8c0 2-1.8 3.3-4 3.3s-4-1.3-4-3.3z" fill="#b5bdcb"/>
</svg>
<div class="abs" style="left:1591px;top:16px;width:1px;height:30px;background:#66748d"></div>
<svg class="abs" style="left:1628px;top:15px" width="32" height="32" viewBox="0 0 32 32">
<circle cx="16" cy="16" r="15" fill="#b5bdcb"/>
<path d="M11.9 12.9C11.9 10.3 13.8 9.4 16.2 9.4C18.7 9.4 20.3 10.7 20.3 12.6C20.3 14.6 18.6 15.4 17.3 16.3C16.5 16.9 16.1 17.4 16.1 18.6" fill="none" stroke="#44546f" stroke-width="3.2" stroke-linecap="round"/>
<circle cx="16.1" cy="22.6" r="1.9" fill="#44546f"/>
</svg>
<div class="abs" style="left:1684px;top:16px;width:1px;height:30px;background:#66748d"></div>
<svg class="abs" style="left:1699px;top:14px" width="40" height="40" viewBox="0 0 40 40">
<defs><clipPath id="av"><circle cx="20" cy="20" r="20"/></clipPath></defs>
<g clip-path="url(#av)">
<rect width="40" height="40" fill="#7f6a5c"/>
<rect x="0" y="0" width="5" height="40" fill="#9a8474"/>
<rect x="9" y="0" width="4" height="40" fill="#6a5548"/>
<rect x="28" y="0" width="4" height="40" fill="#94806f"/>
<rect x="34" y="0" width="6" height="40" fill="#6e5a4d"/>
<path d="M10 34C9 20 10 5 19.5 4.5C29 5 30.5 20 29.5 34Z" fill="#33241d"/>
<ellipse cx="19.7" cy="18" rx="6.6" ry="9.3" fill="#e9d9cc"/>
<path d="M3 42C5 34 10 31 19.5 30.5C29 31 34 34 36 42Z" fill="#1b1817"/>
<path d="M13.5 31.5C15 34 17 35.5 19.5 35.5C22 35.5 24 34 25.5 31.5C23.5 30.8 21.5 30.5 19.5 30.5C17.5 30.5 15.5 30.8 13.5 31.5Z" fill="#ded6c8"/>
<path d="M13 14C14 9 16.5 7.5 19.8 7.5C23.5 7.5 26 9.5 26.5 14C24 11 20 10 13 14Z" fill="#33241d"/>
</g>
</svg>
<div class="abs" style="left:1756px;top:21px;font-weight:bold;font-size:17.5px;color:#e3e7ee;white-space:nowrap">Alyssa Sands</div>
<svg class="abs" style="left:1888px;top:22px" width="24" height="18" viewBox="0 0 24 18">
<path d="M4 5.5L12 13L20 5.5" fill="none" stroke="#e3e7ee" stroke-width="2.4" stroke-linecap="round" stroke-linejoin="round"/>
</svg>
</body></html>
